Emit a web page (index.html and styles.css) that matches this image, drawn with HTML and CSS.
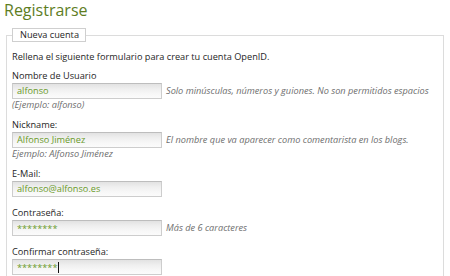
FILE: index.html
```html
<!DOCTYPE html>
<html lang="es">
<head>
<meta charset="utf-8">
<title>Registrarse</title>
<link rel="stylesheet" href="styles.css">
</head>
<body>
<h1 class="title">Registrarse</h1>
<fieldset class="box">
  <legend class="box-legend">Nueva cuenta</legend>
  <p class="intro">Rellena el siguiente formulario para crear tu cuenta OpenID.</p>

  <div class="field">
    <div class="label">Nombre de Usuario</div>
    <div class="row">
      <div class="input"><span class="val">alfonso</span></div>
      <span class="hint">Solo minúsculas, números y guiones. No son permitidos espacios</span>
    </div>
    <div class="example">(Ejemplo: alfonso)</div>
  </div>

  <div class="field">
    <div class="label">Nickname:</div>
    <div class="row">
      <div class="input"><span class="val">Alfonso Jiménez</span></div>
      <span class="hint">El nombre que va aparecer como comentarista en los blogs.</span>
    </div>
    <div class="example">Ejemplo: Alfonso Jiménez</div>
  </div>

  <div class="field">
    <div class="label">E-Mail:</div>
    <div class="row">
      <div class="input"><span class="val">alfonso@alfonso.es</span></div>
    </div>
  </div>

  <div class="field">
    <div class="label">Contraseña:</div>
    <div class="row">
      <div class="input"><span class="val pw">********</span></div>
      <span class="hint">Más de 6 caracteres</span>
    </div>
  </div>

  <div class="field">
    <div class="label">Confirmar contraseña:</div>
    <div class="row">
      <div class="input"><span class="val pw">********</span><span class="caret"></span></div>
    </div>
  </div>
</fieldset>
</body>
</html>
```
FILE: styles.css
```css
html, body {
  margin: 0;
  padding: 0;
  background: #fff;
}
body {
  font-family: "Open Sans", "DejaVu Sans", sans-serif;
  font-size: 9.2px;
  color: #262626;
  overflow: hidden;
}
.title {
  margin: 0 0 8px 0;
  padding-left: 4px;
  font-size: 16px;
  line-height: 20px;
  font-weight: normal;
  color: #5e7d1f;
}
.box {
  margin: 0 6px;
  padding: 0 5px 20px 5px;
  border: 1px solid #dcdcdc;
  min-width: 0;
}
.box-legend {
  padding: 0 6px 0 7px;
  margin-left: 0;
  border: 1px solid #cfcfcf;
  background: #fff;
  line-height: 12px;
  color: #262626;
}
.intro {
  margin: 9px 0 7px 0;
  line-height: 12px;
}
.field {
  display: flex;
  flex-direction: column;
  margin-bottom: 10px;
}
.label {
  line-height: 12px;
  margin-bottom: 1px;
}
.row {
  display: flex;
  align-items: center;
  gap: 4px;
}
.input {
  box-sizing: border-box;
  width: 150px;
  height: 16px;
  border: 1px solid #cdcdcd;
  border-top-color: #bdbdbd;
  background: linear-gradient(to bottom, #e2e2e2 0%, #efefef 35%, #f7f7f7 70%, #fbfbfb 100%);
  display: flex;
  align-items: center;
  padding-left: 4px;
  flex-shrink: 0;
}
.val {
  color: #6a9a2a;
  line-height: 12px;
  white-space: nowrap;
}
.pw {
  position: relative;
  top: 1px;
}
.caret {
  display: inline-block;
  width: 1px;
  height: 11px;
  background: #111;
  margin-left: 1px;
}
.hint {
  font-style: italic;
  color: #6e6e6e;
  line-height: 12px;
  white-space: nowrap;
}
.example {
  font-style: italic;
  color: #6e6e6e;
  line-height: 12px;
  margin-bottom: -2px;
}
```
